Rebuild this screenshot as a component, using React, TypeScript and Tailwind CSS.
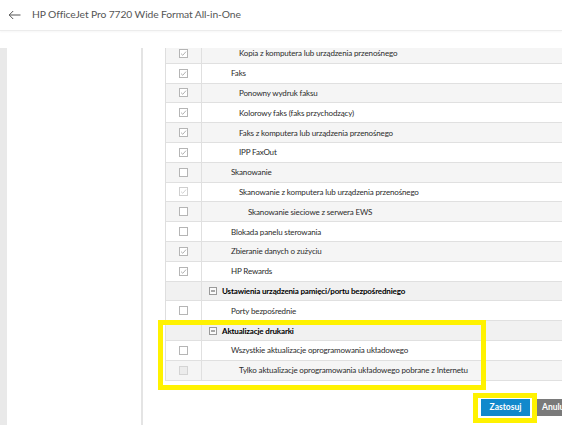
type Box = "checked" | "light" | "empty" | "disabled";

type Row =
  | { label: string; indent: number; box: Box }
  | { section: string };

const rows: Row[] = [
  { label: "Kopia z komputera lub urządzenia przenośnego", indent: 2, box: "checked" },
  { label: "Faks", indent: 1, box: "checked" },
  { label: "Ponowny wydruk faksu", indent: 2, box: "checked" },
  { label: "Kolorowy faks (faks przychodzący)", indent: 2, box: "checked" },
  { label: "Faks z komputera lub urządzenia przenośnego", indent: 2, box: "checked" },
  { label: "IPP FaxOut", indent: 2, box: "checked" },
  { label: "Skanowanie", indent: 1, box: "empty" },
  { label: "Skanowanie z komputera lub urządzenia przenośnego", indent: 2, box: "light" },
  { label: "Skanowanie sieciowe z serwera EWS", indent: 3, box: "empty" },
  { label: "Blokada panelu sterowania", indent: 1, box: "empty" },
  { label: "Zbieranie danych o zużyciu", indent: 1, box: "checked" },
  { label: "HP Rewards", indent: 1, box: "checked" },
  { section: "Ustawienia urządzenia pamięci/portu bezpośredniego" },
  { label: "Porty bezpośrednie", indent: 1, box: "empty" },
  { section: "Aktualizacje drukarki" },
  { label: "Wszystkie aktualizacje oprogramowania układowego", indent: 1, box: "empty" },
  { label: "Tylko aktualizacje oprogramowania układowego pobrane z Internetu", indent: 2, box: "disabled" },
];

const indents: Record<number, string> = {
  1: "pl-[29px]",
  2: "pl-[37px]",
  3: "pl-[46px]",
};

const CheckBox = ({ state }: { state: Box }) => {
  const fill = state === "disabled" ? "#ececec" : "#ffffff";
  const stroke = state === "disabled" ? "#d4d4d4" : state === "light" ? "#cfcfcf" : "#b5b5b5";
  const tick = state === "light" ? "#cdcdcd" : "#a9a9a9";
  return (
    <svg width="9" height="9" viewBox="0 0 9 9">
      <rect x="0.5" y="0.5" width="8" height="8" fill={fill} stroke={stroke} />
      {(state === "checked" || state === "light") && (
        <polyline points="2,4.6 3.8,6.3 7,2.6" fill="none" stroke={tick} strokeWidth="0.9" />
      )}
    </svg>
  );
};

const Minus = () => (
  <svg width="8" height="8" viewBox="0 0 8 8">
    <rect x="0.5" y="0.5" width="7" height="7" fill="#fafafa" stroke="#9a9a9a" />
    <line x1="2" y1="4" x2="6" y2="4" stroke="#555" strokeWidth="1" />
  </svg>
);

const App = () => {
  return (
    <div className="relative w-[562px] h-[425px] overflow-hidden bg-white font-['Lato','Liberation_Sans',sans-serif]">
      <div className="h-[31px] flex items-center border-b border-[#ececec] shadow-[0_1px_2px_rgba(0,0,0,0.04)]">
        <svg className="ml-[8px]" width="13" height="10" viewBox="0 0 13 10">
          <path d="M12.5 5H1.2M5.2 1L1.2 5l4 4" fill="none" stroke="#555" strokeWidth="1" />
        </svg>
        <span className="ml-[11px] text-[10.3px] text-[#555] tracking-[-0.1px]">
          HP OfficeJet Pro 7720 Wide Format All-in-One
        </span>
      </div>

      <div className="flex mt-[17px] h-[377px]">
        <div className="w-[7px] bg-[#e9e9e9]" />
        <div className="w-[134px]" />
        <div className="w-[2px] bg-[#e4e4e4]" />
        <div className="flex-1 overflow-hidden pl-[22px]">
          <div className="-mt-[4px] w-[430px] border-l border-[#dedede] text-[8px] tracking-[-0.15px] text-[#2b2b2b]">
            {rows.map((r, i) => {
              const bg = i % 2 === 0 ? "bg-[#f5f5f5]" : "bg-white";
              if ("section" in r) {
                return (
                  <div key={i} className="flex h-[19.8px] border-b border-[#e0e0e0] bg-[#f1f1f1]">
                    <div className="w-[36px] border-r border-[#e0e0e0]" />
                    <div className="flex items-center pl-[7px] gap-[5px] font-bold text-black">
                      <Minus />
                      <span>{r.section}</span>
                    </div>
                  </div>
                );
              }
              return (
                <div key={i} className={`flex h-[19.8px] border-b border-[#e0e0e0] ${bg}`}>
                  <div className="w-[36px] flex items-center justify-center border-r border-[#e0e0e0]">
                    <CheckBox state={r.box} />
                  </div>
                  <div className={`flex items-center whitespace-nowrap ${indents[r.indent]}`}>
                    {r.label}
                  </div>
                </div>
              );
            })}
          </div>
          <div className="flex gap-[7px] pl-[316px] mt-[18px]">
            <div className="shrink-0 w-[49px] h-[17px] bg-[#1189cc] text-white text-[8.5px] font-bold flex items-center justify-center">
              Zastosuj
            </div>
            <div className="shrink-0 h-[17px] px-[5px] bg-[#7a7a7a] text-white text-[8.5px] font-bold flex items-center">
              Anuluj
            </div>
          </div>
        </div>
      </div>

      <div className="absolute left-[158px] top-[320px] w-[328px] h-[70px] border-[5px] border-[#fff200]" />
      <div className="absolute left-[473px] top-[393px] w-[64px] h-[30px] border-[5px] border-[#fff200]" />
    </div>
  );
};

export default App;
